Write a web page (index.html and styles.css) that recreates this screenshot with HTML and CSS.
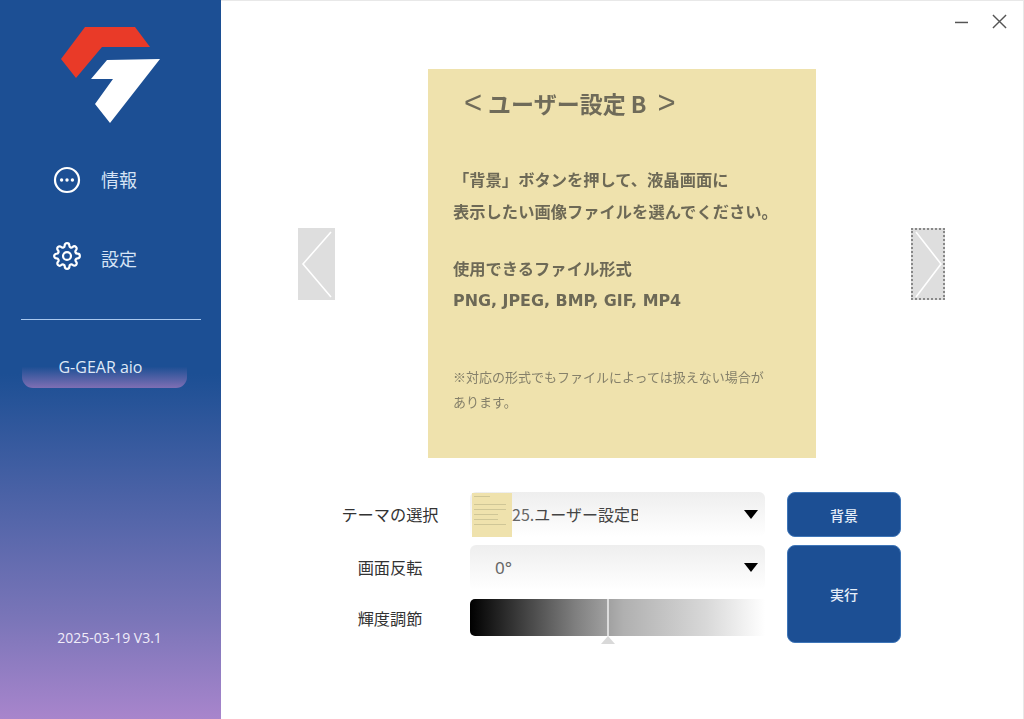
FILE: index.html
```html
<!DOCTYPE html>
<html lang="ja">
<head>
<meta charset="utf-8">
<title>G-GEAR aio</title>
<link rel="stylesheet" href="styles.css">
</head>
<body>
<div class="app">
  <aside class="sidebar">
    <svg class="logo" viewBox="61 27 100 97" width="100" height="97">
      <polygon fill="#e93a28" points="85,27 135,27 150,47 102,47 76,78 61,59"/>
      <polygon fill="#ffffff" points="160,59 110,123 95,104 113,79 91,79 107,60"/>
    </svg>
    <nav class="nav">
      <div class="nav-item">
        <svg class="nav-icon" viewBox="0 0 28 28" width="28" height="28">
          <circle cx="14" cy="14" r="12" fill="none" stroke="#fff" stroke-width="2.2"/>
          <circle cx="8.6" cy="14" r="1.7" fill="#fff"/>
          <circle cx="14" cy="14" r="1.7" fill="#fff"/>
          <circle cx="19.4" cy="14" r="1.7" fill="#fff"/>
        </svg>
        <span>情報</span>
      </div>
      <div class="nav-item nav-item-low">
        <svg class="nav-icon" viewBox="0 0 24 24" width="28" height="28">
          <circle cx="12" cy="12" r="3.4" fill="none" stroke="#fff" stroke-width="1.9"/>
          <path fill="none" stroke="#fff" stroke-width="1.9" stroke-linejoin="round" d="M19.4 15a1.65 1.65 0 0 0 .33 1.82l.06.06a2 2 0 0 1 0 2.83 2 2 0 0 1-2.83 0l-.06-.06a1.65 1.65 0 0 0-1.82-.33 1.65 1.65 0 0 0-1 1.51V21a2 2 0 0 1-2 2 2 2 0 0 1-2-2v-.09A1.65 1.65 0 0 0 9 19.4a1.65 1.65 0 0 0-1.82.33l-.06.06a2 2 0 0 1-2.83 0 2 2 0 0 1 0-2.83l.06-.06a1.65 1.65 0 0 0 .33-1.82 1.65 1.65 0 0 0-1.51-1H3a2 2 0 0 1-2-2 2 2 0 0 1 2-2h.09A1.65 1.65 0 0 0 4.6 9a1.65 1.65 0 0 0-.33-1.82l-.06-.06a2 2 0 0 1 0-2.83 2 2 0 0 1 2.83 0l.06.06a1.65 1.65 0 0 0 1.82.33H9a1.65 1.65 0 0 0 1-1.51V3a2 2 0 0 1 2-2 2 2 0 0 1 2 2v.09a1.65 1.65 0 0 0 1 1.51 1.65 1.65 0 0 0 1.82-.33l.06-.06a2 2 0 0 1 2.83 0 2 2 0 0 1 0 2.83l-.06.06a1.65 1.65 0 0 0-.33 1.82V9a1.65 1.65 0 0 0 1.51 1H21a2 2 0 0 1 2 2 2 2 0 0 1-2 2h-.09a1.65 1.65 0 0 0-1.51 1z"/>
        </svg>
        <span>設定</span>
      </div>
    </nav>
    <hr class="divider">
    <div class="product">G-GEAR aio</div>
    <div class="version">2025-03-19 V3.1</div>
  </aside>
  <main class="main">
    <header class="window-controls">
      <svg viewBox="0 0 14 14" width="13" height="14" class="win-min"><path d="M0 7.5H14" stroke="#555" stroke-width="1.6"/></svg>
      <svg viewBox="0 0 16 16" width="15" height="15"><path d="M1 1L15 15M15 1L1 15" stroke="#555" stroke-width="1.5" fill="none"/></svg>
    </header>
    <section class="stage">
      <button class="arrow arrow-left" type="button" aria-label="前へ">
        <svg viewBox="0 0 37 72" width="37" height="72"><path d="M33 4L5 36L33 69" fill="none" stroke="#fff" stroke-width="1.6"/></svg>
      </button>
      <div class="preview">
        <h1 class="preview-title"><span class="angle">&lt;</span>ユーザー設定 B<span class="angle angle-end">&gt;</span></h1>
        <p class="preview-body body-first">「背景」ボタンを押して、液晶画面に</p>
        <p class="preview-body body-shift">表示したい画像ファイルを選んでください。</p>
        <p class="preview-body body-formats">使用できるファイル形式</p>
        <p class="preview-body body-latin">PNG, JPEG, BMP, GIF, MP4</p>
        <p class="preview-note note-first">※対応の形式でもファイルによっては扱えない場合が</p>
        <p class="preview-note">あります。</p>
      </div>
      <button class="arrow arrow-right" type="button" aria-label="次へ">
        <svg viewBox="0 0 34 72" width="34" height="72"><path d="M5 4L30 36L5 69" fill="none" stroke="#fff" stroke-width="1.6"/></svg>
      </button>
    </section>
    <section class="form">
      <label class="form-label">テーマの選択</label>
      <div class="select select-theme">
        <div class="thumb">
          <i class="t-line t-short"></i>
          <i class="t-line"></i>
          <i class="t-line"></i>
          <i class="t-line t-mid"></i>
          <i class="t-line t-mid"></i>
          <i class="t-line"></i>
        </div>
        <span class="select-text"><span class="num">25.</span>ユーザー設定B</span>
        <i class="caret"></i>
      </div>
      <button class="btn" type="button">背景</button>
      <label class="form-label">画面反転</label>
      <div class="select select-rotate">
        <span class="rotate-text">0°</span>
        <i class="caret"></i>
      </div>
      <button class="btn btn-run" type="button">実行</button>
      <label class="form-label form-label-last">輝度調節</label>
      <div class="slider">
        <i class="slider-line"></i>
        <i class="slider-thumb"></i>
      </div>
    </section>
  </main>
</div>
</body>
</html>
```
FILE: styles.css
```css
* { box-sizing: border-box; }
html, body { margin: 0; height: 100%; }
body {
  width: 1024px;
  height: 719px;
  overflow: hidden;
  background: #fff;
  font-family: "Noto Sans CJK JP", "Noto Sans", sans-serif;
}
.app { display: flex; height: 719px; }

.sidebar {
  width: 221px;
  flex: none;
  display: flex;
  flex-direction: column;
  color: #d5e3f5;
  background: linear-gradient(180deg, #1c4f94 0%, #1c4f94 52%, #7a75b8 86%, #a885cc 100%);
}
.logo { display: block; margin: 27px 0 0 61px; }
.nav { display: flex; flex-direction: column; margin-top: 38px; }
.nav-item {
  display: flex;
  align-items: center;
  gap: 20px;
  padding-left: 53px;
  height: 36px;
  font-size: 18px;
}
.nav-item span { position: relative; top: -1px; }
.nav-item-low { margin-top: 40px; }
.nav-item-low span { top: 2px; }
.nav-icon { flex: none; }
.divider {
  width: 180px;
  height: 1px;
  margin: 45px 0 0 21px;
  border: 0;
  background: #a9c8ee;
}
.product {
  width: 165px;
  height: 41px;
  margin: 27px 0 0 22px;
  padding: 10px 8px 0 0;
  border-radius: 0 0 11px 11px;
  text-align: center;
  font: 16px/20px "Open Sans", sans-serif;
  color: #dfe9f7;
  background: linear-gradient(180deg, #1c4f94 0%, #1c4f94 48%, #7e6fb4 100%);
}
.version {
  margin-top: auto;
  padding-bottom: 72px;
  padding-right: 2px;
  text-align: center;
  font: 14px/18px "Open Sans", sans-serif;
  color: #f0ecf9;
}

.main { flex: 1; display: flex; flex-direction: column; border-top: 1px solid #e8e8e8; border-right: 1px solid #e8e8e8; }
.window-controls {
  height: 68px;
  display: flex;
  justify-content: flex-end;
  align-items: flex-start;
  gap: 24px;
  padding: 13px 16px 0 0;
}
.win-min { margin-top: 1px; }

.stage { display: flex; align-items: center; padding-left: 77px; }
.arrow {
  display: block;
  padding: 0;
  border: 0;
  height: 72px;
  background: #dedede;
}
.arrow svg { display: block; }
.arrow-left { width: 37px; margin-right: 93px; }
.arrow-right {
  width: 34px;
  margin-left: 95px;
  outline: 2px dotted #888;
  outline-offset: -2px;
}
.preview {
  width: 388px;
  height: 389px;
  flex: none;
  padding: 0 0 0 25px;
  background: #efe2ad;
  color: #6d6956;
  filter: blur(0.35px);
}
.preview-title {
  display: flex;
  align-items: center;
  margin: 18px 0 0 11px;
  font-size: 23px;
  line-height: 32px;
  font-weight: 700;
  color: #6f6b59;
}
.angle {
  font-size: 31px;
  font-weight: 400;
  line-height: 32px;
  margin-right: 6px;
  font-family: "Liberation Sans", sans-serif;
}
.angle-end { margin: 0 0 0 11px; }
.preview-body {
  margin: 0;
  font-size: 16.3px;
  line-height: 33px;
  font-weight: 700;
}
.body-first { margin-top: 44px; }
.body-shift { margin-top: -1px; }
.body-formats { margin-top: 24px; }
.body-latin {
  margin-top: -1px;
  font: 700 15.9px/33px "DejaVu Sans", sans-serif;
}
.preview-note {
  margin: 0;
  font-size: 13px;
  line-height: 25px;
  color: #85806a;
}
.note-first { margin-top: 47px; }

.form {
  margin-top: 34px;
  padding-left: 109px;
  display: grid;
  grid-template-columns: 120px 295px 116px;
  grid-template-rows: 45px 45px 45px;
  column-gap: 20px;
  row-gap: 8px;
  align-items: center;
}
.form-label {
  font-size: 16.2px;
  color: #333;
  text-align: center;
  padding-bottom: 2px;
}
.form-label-last { padding-bottom: 6px; }
.select {
  position: relative;
  height: 45px;
  display: flex;
  align-items: center;
  border-radius: 6px;
  background: linear-gradient(180deg, #eeeeee 0%, #ffffff 100%);
  color: #444;
  font-size: 16px;
}
.select-theme { padding-left: 2px; }
.thumb {
  width: 40px;
  height: 44px;
  flex: none;
  padding: 3px 2px;
  display: flex;
  flex-direction: column;
  gap: 4px;
  background: #efe2ad;
}
.t-line { display: block; height: 1px; width: 32px; background: #cfc697; }
.t-short { width: 16px; margin-bottom: 3px; }
.t-mid { width: 24px; }
.select-text {
  width: 126px;
  overflow: hidden;
  white-space: nowrap;
  margin-bottom: 1px;
}
.num { color: #666; }
.rotate-text { padding-left: 25px; font-size: 17px; color: #666; font-family: "Noto Sans", sans-serif; }
.caret {
  position: absolute;
  right: 7px;
  top: 18px;
  width: 0;
  height: 0;
  border-left: 7px solid transparent;
  border-right: 7px solid transparent;
  border-top: 9px solid #000;
}
.btn {
  display: block;
  width: 114px;
  height: 45px;
  margin-left: 2px;
  padding: 0;
  border: 1px solid #3f76b8;
  border-radius: 8px;
  background: #1c4f94;
  color: #e6eef9;
  font: 500 14px "Noto Sans CJK JP", sans-serif;
}
.btn-run { grid-row: 2 / span 2; grid-column: 3; height: 98px; align-self: start; }
.slider {
  position: relative;
  height: 37px;
  margin-top: -7px;
  border-radius: 5px 0 0 5px;
  background: linear-gradient(90deg, #000 0%, #808080 36%, #b0b0b0 52%, #d8d8d8 80%, #fff 100%);
}
.slider-line {
  position: absolute;
  left: 137px;
  top: 0;
  bottom: 0;
  width: 2px;
  background: #dcdcdc;
}
.slider-thumb {
  position: absolute;
  left: 131px;
  top: 37px;
  width: 0;
  height: 0;
  border-left: 7px solid transparent;
  border-right: 7px solid transparent;
  border-bottom: 8px solid #d9d9d9;
}
```
